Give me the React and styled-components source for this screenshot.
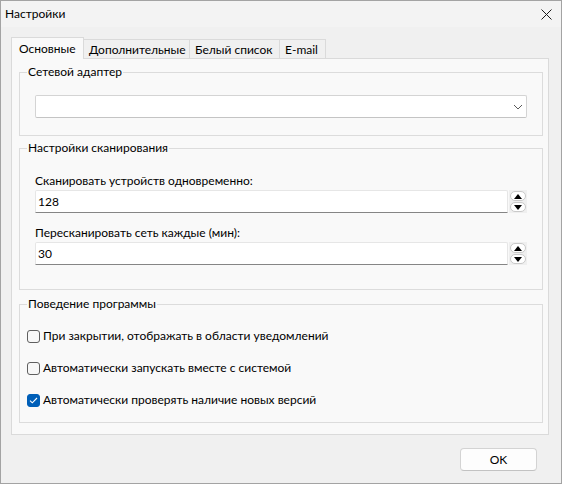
import React from "react";
import styled, { createGlobalStyle } from "styled-components";

const Global = createGlobalStyle`
  html, body { margin: 0; padding: 0; background: #f0f0f0; }
  body { font-family: Lato, "Noto Sans", sans-serif; font-size: 12px; color: #000; }
  * { box-sizing: border-box; }
`;

const Window = styled.div`
  width: 562px;
  height: 484px;
  border: 1px solid #a3a3a3;
  background: #f0f0f0;
  display: flex;
  flex-direction: column;
`;

const TitleBar = styled.div`
  height: 26px;
  flex: none;
  display: flex;
  align-items: center;
  justify-content: space-between;
  padding: 0 9px 0 4px;
  background: #f3f3f3;
`;

const Title = styled.span`
  font-size: 12px;
  line-height: 16px;
`;

const CloseIcon = styled.svg`
  width: 11px;
  height: 11px;
  display: block;
`;

const Body = styled.div`
  flex: 1;
  display: flex;
  flex-direction: column;
  padding: 10px 12px 0 10px;
`;

const TabStrip = styled.div`
  display: flex;
  align-items: flex-end;
  height: 21px;
`;

const Tab = styled.div`
  position: relative;
  z-index: ${(p) => (p.$active ? 1 : 0)};
  width: ${(p) => p.$w}px;
  height: ${(p) => (p.$active ? 22 : 19)}px;
  margin-bottom: ${(p) => (p.$active ? -1 : 0)}px;
  margin-left: ${(p) => (p.$first ? 0 : -1)}px;
  background: ${(p) => (p.$active ? "#f9f9f9" : "#f0f0f0")};
  border: 1px solid #dadada;
  border-bottom: none;
  display: flex;
  align-items: center;
  padding-left: ${(p) => (p.$active ? 7 : 5)}px;
  padding-top: ${(p) => (p.$active ? 0 : 1)}px;
  white-space: nowrap;
  font-size: 12px;
  line-height: 16px;
`;

const Panel = styled.div`
  border: 1px solid #dadada;
  background: #f9f9f9;
  padding: 5px 5px 11px 7px;
  display: flex;
  flex-direction: column;
`;

const Group = styled.fieldset`
  margin: ${(p) => p.$mt || 0}px 0 0 0;
  padding: 0 15px ${(p) => p.$pb}px ${(p) => p.$pl}px;
  border: 1px solid #dcdcdc;
  min-width: 0;
`;

const Legend = styled.legend`
  margin-left: ${(p) => 7 - p.$pl}px;
  padding: 0 1px;
  font-size: 12px;
  line-height: 16px;
`;

const Combo = styled.div`
  margin-top: 15px;
  height: 23px;
  background: #fff;
  border: 1px solid #d4d4d4;
  border-bottom-color: #c4c4c4;
  border-radius: 2px;
  display: flex;
  align-items: center;
  justify-content: flex-end;
  padding-right: 3px;
`;

const Chevron = styled.svg`
  width: 10px;
  height: 6px;
  display: block;
`;

const FieldLabel = styled.div`
  margin-top: ${(p) => p.$mt}px;
  font-size: 12px;
  line-height: 16px;
`;

const SpinRow = styled.div`
  margin-top: 1px;
  display: flex;
  height: 23px;
`;

const NumInput = styled.div`
  flex: 1;
  background: #fff;
  border: 1px solid #e6e6e6;
  border-bottom: 1px solid #858585;
  border-radius: 2px 2px 0 0;
  display: flex;
  align-items: center;
  padding-left: 2px;
  font-size: 12px;
`;

const Spinner = styled.div`
  width: 18px;
  margin-left: 1px;
  background: #efefef;
  display: flex;
  flex-direction: column;
  justify-content: space-between;
  padding: 1px 1px 1px 1px;
`;

const SpinBtn = styled.div`
  height: 10px;
  background: #fff;
  border: 1px solid #c9c9c9;
  border-radius: 5px;
  display: flex;
  align-items: center;
  justify-content: center;
`;

const Triangle = styled.svg`
  width: 8px;
  height: 5px;
  display: block;
`;

const CheckRow = styled.label`
  display: flex;
  align-items: center;
  height: 20px;
  margin-top: ${(p) => p.$mt}px;
  font-size: 12px;
  line-height: 16px;
`;

const Box = styled.span`
  width: 13px;
  height: 13px;
  flex: none;
  border-radius: 3px;
  border: 1px solid ${(p) => (p.$checked ? "#005fb8" : "#5f5f5f")};
  background: ${(p) => (p.$checked ? "#005fb8" : "#f7f7f7")};
  display: flex;
  align-items: center;
  justify-content: center;
  margin-right: 3px;
`;

const Footer = styled.div`
  display: flex;
  justify-content: flex-end;
  padding: 13px 12px 0 0;
`;

const OkButton = styled.button`
  width: 77px;
  height: 23px;
  background: #fdfdfd;
  border: 1px solid #d3d3d3;
  border-bottom-color: #c2c2c2;
  border-radius: 4px;
  font-family: inherit;
  font-size: 12px;
  color: #000;
  padding: 0;
`;

function Spin({ value }) {
  return (
    <SpinRow>
      <NumInput>{value}</NumInput>
      <Spinner>
        <SpinBtn>
          <Triangle viewBox="0 0 8 5"><path d="M0 5 L4 0 L8 5 Z" fill="#000" /></Triangle>
        </SpinBtn>
        <SpinBtn>
          <Triangle viewBox="0 0 8 5"><path d="M0 0 L8 0 L4 5 Z" fill="#000" /></Triangle>
        </SpinBtn>
      </Spinner>
    </SpinRow>
  );
}

function Check({ checked, children, mt }) {
  return (
    <CheckRow $mt={mt}>
      <Box $checked={checked}>
        {checked && (
          <svg width="9" height="7" viewBox="0 0 9 7">
            <path d="M1 3.6 L3.3 5.8 L8 1" fill="none" stroke="#fff" strokeWidth="1.1" />
          </svg>
        )}
      </Box>
      {children}
    </CheckRow>
  );
}

export default function App() {
  return (
    <>
      <Global />
      <Window>
        <TitleBar>
          <Title>Настройки</Title>
          <CloseIcon viewBox="0 0 11 11">
            <path d="M0.5 0.5 L10.5 10.5 M10.5 0.5 L0.5 10.5" stroke="#1b1b1b" strokeWidth="1" />
          </CloseIcon>
        </TitleBar>
        <Body>
          <TabStrip>
            <Tab $active $first $w={73}>Основные</Tab>
            <Tab $w={107}>Дополнительные</Tab>
            <Tab $w={91}>Белый список</Tab>
            <Tab $w={47}>E-mail</Tab>
          </TabStrip>
          <Panel>
            <Group $pl={15} $pb={17}>
              <Legend $pl={15}>Сетевой адаптер</Legend>
              <Combo>
                <Chevron viewBox="0 0 10 6">
                  <path d="M1 1 L5 5 L9 1" fill="none" stroke="#5a5a5a" strokeWidth="1" />
                </Chevron>
              </Combo>
            </Group>
            <Group $mt={4} $pl={15} $pb={24}>
              <Legend $pl={15}>Настройки сканирования</Legend>
              <FieldLabel $mt={17}>Сканировать устройств одновременно:</FieldLabel>
              <Spin value="128" />
              <FieldLabel $mt={12}>Пересканировать сеть каждые (мин):</FieldLabel>
              <Spin value="30" />
            </Group>
            <Group $mt={6} $pl={7} $pb={12}>
              <Legend $pl={7}>Поведение программы</Legend>
              <Check mt={14}>При закрытии, отображать в области уведомлений</Check>
              <Check mt={12}>Автоматически запускать вместе с системой</Check>
              <Check mt={12} checked>Автоматически проверять наличие новых версий</Check>
            </Group>
          </Panel>
          <Footer>
            <OkButton>OK</OkButton>
          </Footer>
        </Body>
      </Window>
    </>
  );
}
